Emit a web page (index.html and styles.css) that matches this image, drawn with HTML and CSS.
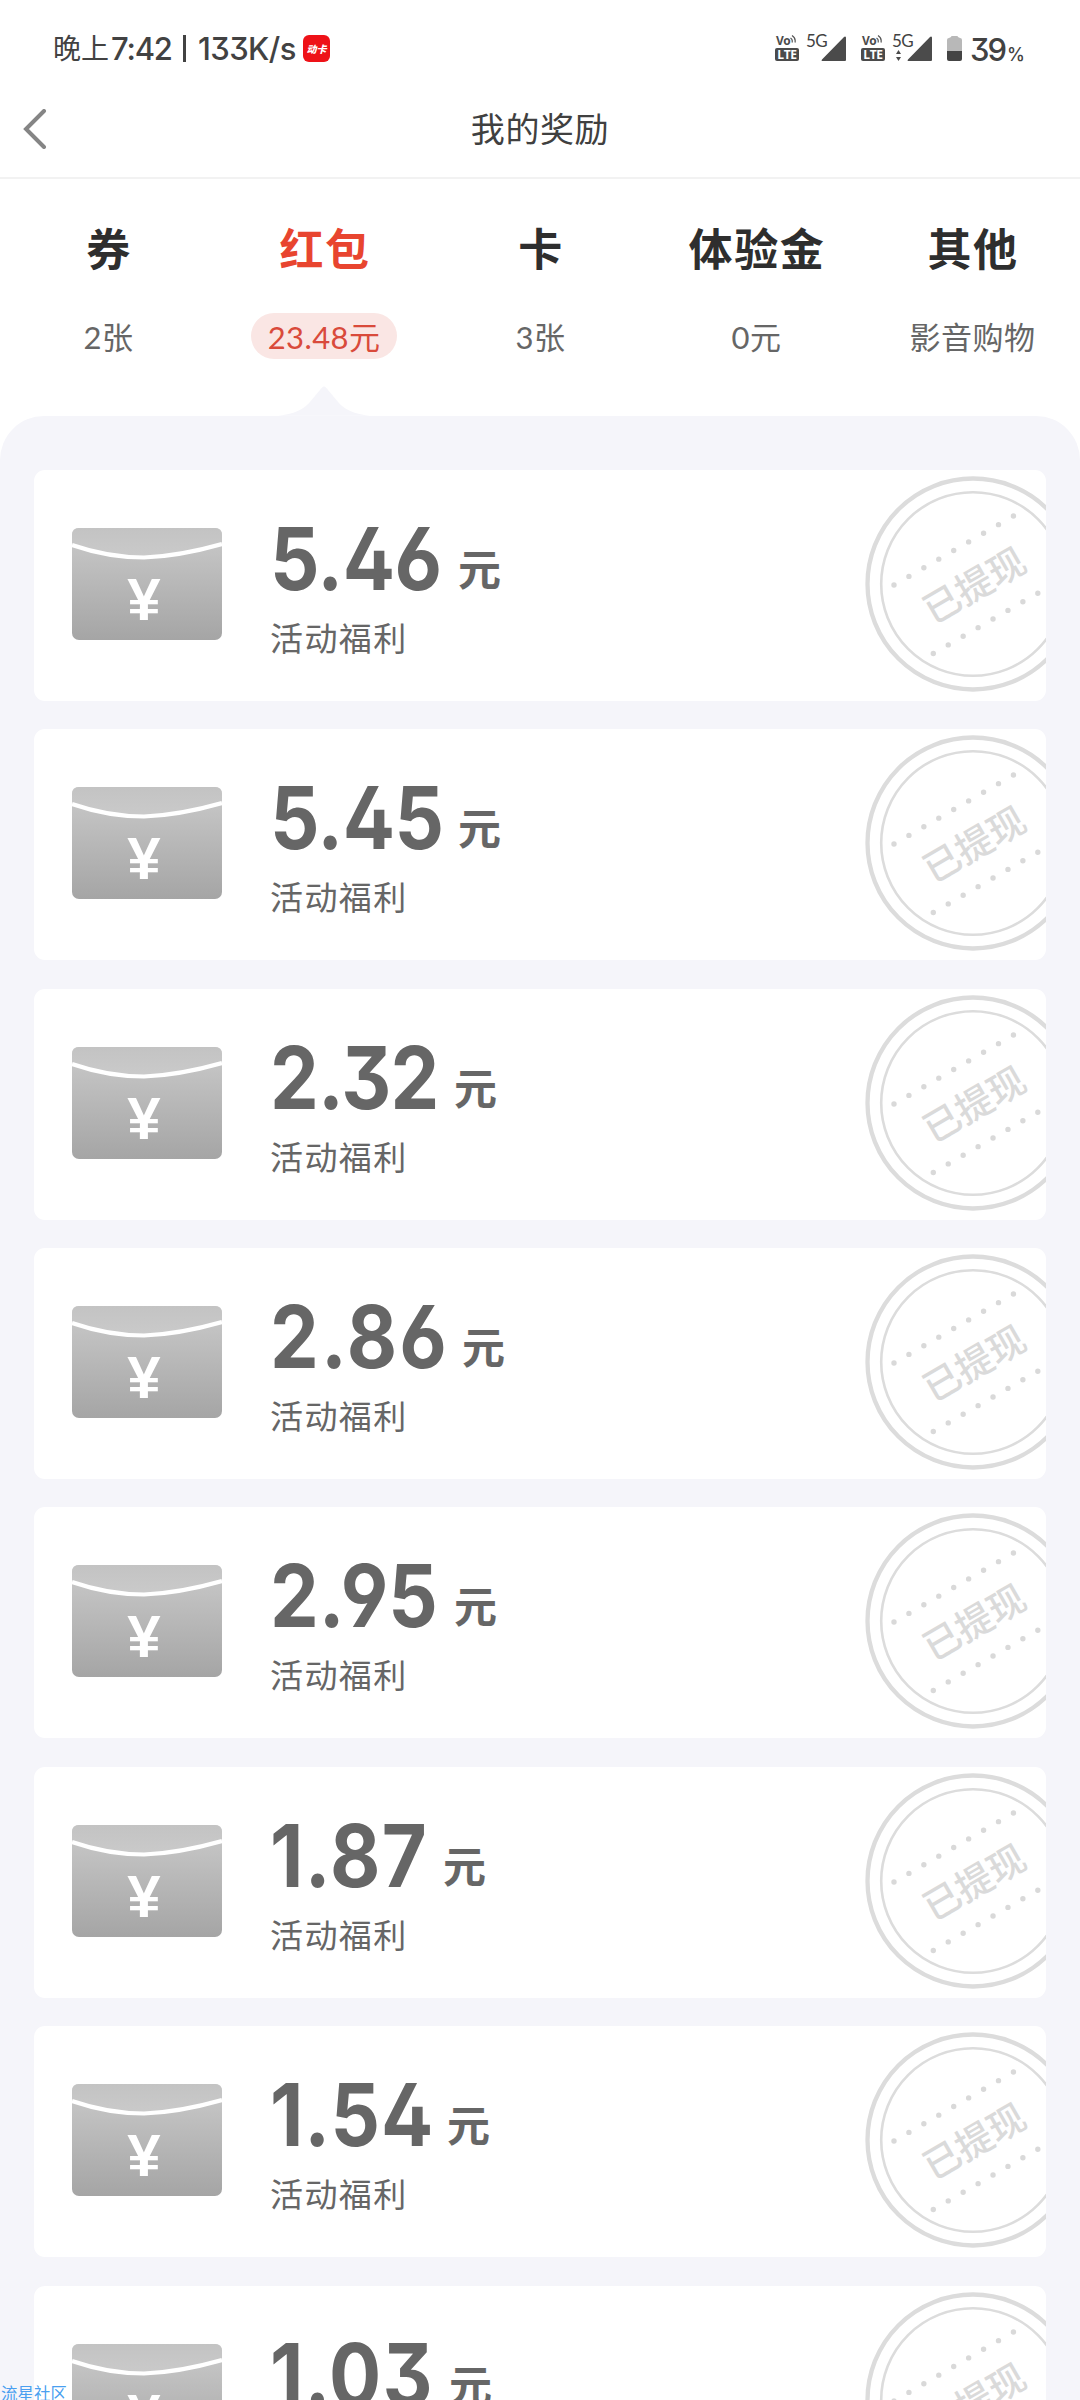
FILE: index.html
```html
<!DOCTYPE html>
<html lang="zh-CN">
<head>
<meta charset="utf-8">
<title>我的奖励</title>
<link rel="stylesheet" href="styles.css">
</head>
<body>
<svg class="defs" aria-hidden="true">
  <defs>
    <linearGradient id="paper" x1="0" y1="0" x2="0" y2="1"><stop offset="0" stop-color="#cacaca"/><stop offset="1" stop-color="#a5a5a5"/></linearGradient>
    <linearGradient id="flap" x1="0" y1="0" x2="0" y2="1"><stop offset="0" stop-color="#c3c3c3"/><stop offset="1" stop-color="#cacaca"/></linearGradient>
    <symbol id="envelope" viewBox="0 0 150 112">
      <rect width="150" height="112" rx="7" fill="url(#paper)"/>
      <path d="M0 17V7Q0 0 7 0H143Q150 0 150 7V17Q75 42 0 17Z" fill="url(#flap)"/>
      <path d="M0 17Q36 29.500 72 29.500Q108 28 150 16" fill="none" stroke="#fff" stroke-width="4.200"/>
    </symbol>
    <symbol id="stamp" viewBox="0 0 216 216">
      <g fill="none" stroke="#dcdcdc"><circle cx="108" cy="108" r="105.500" stroke-width="4.300"/><circle cx="108" cy="108" r="91.800" stroke-width="2.600"/></g>
      <g fill="none" stroke="#d9d9d9" stroke-width="5.400" stroke-linecap="round" stroke-dasharray="0 17.240"><path d="M29 109L149 39.700"/><path d="M68.300 177.500L174 116.500"/></g>
    </symbol>
    <symbol id="signal" viewBox="0 0 25 25"><path d="M1 25Q0 24.500 1 23.500L23 1Q24.500 0 25 1.500V24Q25 25 24 25Z" fill="#4b4b4b"/></symbol>
    <symbol id="wave" viewBox="0 0 6 8"><path d="M.5 3Q3 4.500 2 7.500M2 .5Q6 3 5 7.500" fill="none" stroke="#555" stroke-width="1.200"/></symbol>
  </defs>
</svg>

<header class="status">
  <div class="status-left"><span class="period">晚上</span><span class="clock">7:42</span><span class="bar"></span><span class="speed">133K/s</span><span class="app">动卡</span></div>
  <div class="status-right">
    <span class="volte"><span class="vo">Vo<svg><use href="#wave"/></svg></span><span class="lte">LTE</span></span>
    <span class="net"><b>5G</b><svg><use href="#signal"/></svg></span>
    <span class="volte second"><span class="vo">Vo<svg><use href="#wave"/></svg></span><span class="lte">LTE</span></span>
    <span class="net"><b>5G</b><svg class="updown" viewBox="0 0 5 11"><path d="M0 4L2.500 0L5 4ZM0 7L2.500 11L5 7Z" fill="#4b4b4b"/></svg><svg><use href="#signal"/></svg></span>
    <svg class="battery" viewBox="0 0 15 25"><path d="M4 1Q4 0 5 0H10Q11 0 11 1L13 2Q15 2 15 4V16H0V4Q0 2 2 2Z" fill="#b8b8b8"/><path d="M0 15H15V23Q15 25 13 25H2Q0 25 0 23Z" fill="#444"/></svg>
    <span class="level">39<small>%</small></span>
  </div>
</header>

<nav class="titlebar">
  <svg class="back" viewBox="0 0 24 40"><path d="M21 2L3 20L21 38" fill="none" stroke="#858585" stroke-width="4" stroke-linecap="round"/></svg>
  <h1>我的奖励</h1>
</nav>

<section class="tabs">
  <div class="tab"><h2>券</h2><p>2张</p></div>
  <div class="tab active"><h2>红包</h2><p>23.48元</p>
    <svg class="pointer" viewBox="0 0 96 31"><path d="M0 31Q24 29 34 16L46 1.500Q48-.5 50 1.500L62 16Q72 29 96 31Z" fill="#f5f5fa"/></svg></div>
  <div class="tab"><h2>卡</h2><p>3张</p></div>
  <div class="tab"><h2>体验金</h2><p>0元</p></div>
  <div class="tab"><h2>其他</h2><p>影音购物</p></div>
</section>

<main class="rewards">
  <article class="card"><svg class="envelope"><use href="#envelope"/><text x="72" y="92">¥</text></svg><div class="info"><div class="amount"><b class="w546">5.46</b><i>元</i></div><p>活动福利</p></div><div class="stamp"><svg><use href="#stamp"/></svg><span>已提现</span></div></article>
  <article class="card"><svg class="envelope"><use href="#envelope"/><text x="72" y="92">¥</text></svg><div class="info"><div class="amount"><b class="w545">5.45</b><i>元</i></div><p>活动福利</p></div><div class="stamp"><svg><use href="#stamp"/></svg><span>已提现</span></div></article>
  <article class="card"><svg class="envelope"><use href="#envelope"/><text x="72" y="92">¥</text></svg><div class="info"><div class="amount"><b class="w232">2.32</b><i>元</i></div><p>活动福利</p></div><div class="stamp"><svg><use href="#stamp"/></svg><span>已提现</span></div></article>
  <article class="card"><svg class="envelope"><use href="#envelope"/><text x="72" y="92">¥</text></svg><div class="info"><div class="amount"><b class="w286">2.86</b><i>元</i></div><p>活动福利</p></div><div class="stamp"><svg><use href="#stamp"/></svg><span>已提现</span></div></article>
  <article class="card"><svg class="envelope"><use href="#envelope"/><text x="72" y="92">¥</text></svg><div class="info"><div class="amount"><b class="w295">2.95</b><i>元</i></div><p>活动福利</p></div><div class="stamp"><svg><use href="#stamp"/></svg><span>已提现</span></div></article>
  <article class="card"><svg class="envelope"><use href="#envelope"/><text x="72" y="92">¥</text></svg><div class="info"><div class="amount"><b class="w187">1.87</b><i>元</i></div><p>活动福利</p></div><div class="stamp"><svg><use href="#stamp"/></svg><span>已提现</span></div></article>
  <article class="card"><svg class="envelope"><use href="#envelope"/><text x="72" y="92">¥</text></svg><div class="info"><div class="amount"><b class="w154">1.54</b><i>元</i></div><p>活动福利</p></div><div class="stamp"><svg><use href="#stamp"/></svg><span>已提现</span></div></article>
  <article class="card"><svg class="envelope"><use href="#envelope"/><text x="72" y="92">¥</text></svg><div class="info"><div class="amount"><b class="w103">1.03</b><i>元</i></div><p>活动福利</p></div><div class="stamp"><svg><use href="#stamp"/></svg><span>已提现</span></div></article>
</main>
<div class="watermark">流星社区</div>
</body>
</html>
```
FILE: styles.css
```css
* { box-sizing: border-box; margin: 0; padding: 0; }
body {
  position: relative;
  width: 1080px;
  height: 2400px;
  overflow: hidden;
  display: flex;
  flex-direction: column;
  background: #fff;
  color: #333;
  font-family: Lato, "Noto Sans CJK SC", sans-serif;
}
.defs { position: absolute; width: 0; height: 0; }
svg { display: block; flex: none; }

/* status bar */
.status { flex: none; height: 80px; padding: 16px 59px 0 53px; display: flex; justify-content: space-between; color: #424242; }
.status-left { display: flex; align-items: center; height: 64px; white-space: nowrap; }
.period { width: 56px; font-size: 28px; line-height: 64px; }
.clock { width: 61px; margin-left: 2px; font: 450 31px Inter, sans-serif; letter-spacing: -1.2px; }
.bar { width: 3px; height: 27px; margin: 0 12px 0 11px; background: #424242; }
.speed { width: 99px; font: 450 31px Inter, sans-serif; letter-spacing: -.6px; font-feature-settings: "cv09"; }
.app { width: 27px; height: 27px; margin-left: 6px; border-radius: 6px; background: #ee1218; color: #fff; font: italic 900 10px/27px "Noto Sans CJK SC", sans-serif; text-align: center; }
.status-right { display: flex; align-items: flex-start; padding-top: 18px; }
.volte { width: 24px; height: 27px; margin-top: 1px; display: flex; flex-direction: column; gap: 1px; font-family: "Open Sans", sans-serif; font-weight: 700; color: #4b4b4b; }
.vo { display: flex; height: 12px; padding-left: 1px; font-size: 12px; line-height: 11px; letter-spacing: -.5px; }
.vo svg { width: 6px; height: 8px; }
.lte { height: 13px; border-radius: 2px; background: #4b4b4b; color: #fff; font-size: 12px; line-height: 13px; text-align: center; letter-spacing: -.3px; }
.volte.second { margin-left: 15px; }
.net { position: relative; width: 40px; height: 27px; margin-left: 7px; }
.net b { position: absolute; left: 0; top: -1px; font: 400 17px/15px Lato, sans-serif; letter-spacing: -.5px; }
.net svg { position: absolute; right: 0; top: 2px; width: 25px; height: 25px; }
.net .updown { left: 4px; right: auto; top: 16px; width: 5px; height: 11px; }
.battery { width: 15px; height: 25px; margin: 2px 0 0 15px; }
.level { width: 51px; margin-left: 8px; font: 450 31px/31px Inter, sans-serif; white-space: nowrap; letter-spacing: -2px; font-feature-settings: "cv09"; }
.level small { font-size: 18px; font-weight: 500; margin-left: 2px; }

/* title bar */
.titlebar { flex: none; height: 99px; padding-left: 23px; display: flex; align-items: center; border-bottom: 2px solid #f2f2f2; }
.back { width: 24px; height: 40px; }
.titlebar h1 { flex: 1; margin-right: 47px; text-align: center; font-size: 34px; line-height: 40px; font-weight: 400; letter-spacing: .6px; color: #404040; }

/* tabs */
.tabs { flex: none; height: 237px; display: grid; grid-template-columns: repeat(5, 1fr); }
.tab { position: relative; display: flex; flex-direction: column; align-items: center; padding-top: 40px; }
.tab h2 { height: 60px; padding-left: 2px; font-size: 44px; line-height: 60px; font-weight: 700; letter-spacing: 1.6px; color: #2e2e2e; }
.tab p { height: 46px; margin-top: 34px; padding: 0 16px 0 17px; border-radius: 23px; font-size: 31px; line-height: 48px; letter-spacing: .5px; color: #666; white-space: nowrap; }
.tab.active h2 { color: #e8452f; }
.tab.active p { padding: 0 17px; background: #fae6e4; color: #d94a3b; letter-spacing: .4px; }
.pointer { position: absolute; left: 62px; bottom: 0; width: 92px; height: 29.700px; }

/* reward list */
.rewards { flex: 1; min-height: 0; display: flex; flex-direction: column; gap: 28.36px; padding: 54px 34px 0; border-radius: 44px 44px 0 0; background: #f5f5fa; }
.card { position: relative; flex: none; height: 231px; padding-left: 38px; border-radius: 11px; overflow: hidden; display: flex; background: #fff; }
.envelope { width: 150px; height: 112px; margin-top: 58px; }
.envelope text { fill: #fff; font: 700 60px "Liberation Sans", sans-serif; text-anchor: middle; }
.info { margin-left: 48px; padding-top: 39px; color: #666; }
.amount { display: flex; align-items: baseline; height: 100px; line-height: 100px; white-space: nowrap; }
.amount b { font: 650 86px/100px Inter, sans-serif; letter-spacing: -.5px; font-feature-settings: "cv03", "cv04", "cv09", "ss01"; transform: scaleX(.9); transform-origin: left; }
.amount i { padding-bottom: 4px; margin-top: -4px; font-size: 43px; line-height: 92px; font-style: normal; font-weight: 600; transform: translateY(-4px); }
.info p { margin-top: 6px; font-size: 33px; line-height: 46px; letter-spacing: 1.4px; }
.amount .w546, .amount .w545 { width: 188px; }
.amount .w232 { width: 184px; letter-spacing: -.9px; }
.amount .w295 { width: 184px; letter-spacing: 0; }
.amount .w286 { width: 192px; letter-spacing: 2.4px; }
.amount .w187 { width: 173px; letter-spacing: 1.6px; }
.amount .w154 { width: 177px; letter-spacing: 1px; }
.amount .w103 { width: 179px; letter-spacing: 1.2px; }
.stamp { position: absolute; left: 831px; top: 6px; width: 216px; height: 216px; }
.stamp svg { width: 216px; height: 216px; }
.stamp span { position: absolute; left: 0; top: 0; width: 218px; line-height: 218px; text-align: center; transform: rotate(-30deg); font-size: 37px; font-weight: 500; color: #dadada; }
.watermark { position: absolute; left: 1px; bottom: -6px; font-size: 16.500px; line-height: 24px; color: #4a9ff0; }
```
